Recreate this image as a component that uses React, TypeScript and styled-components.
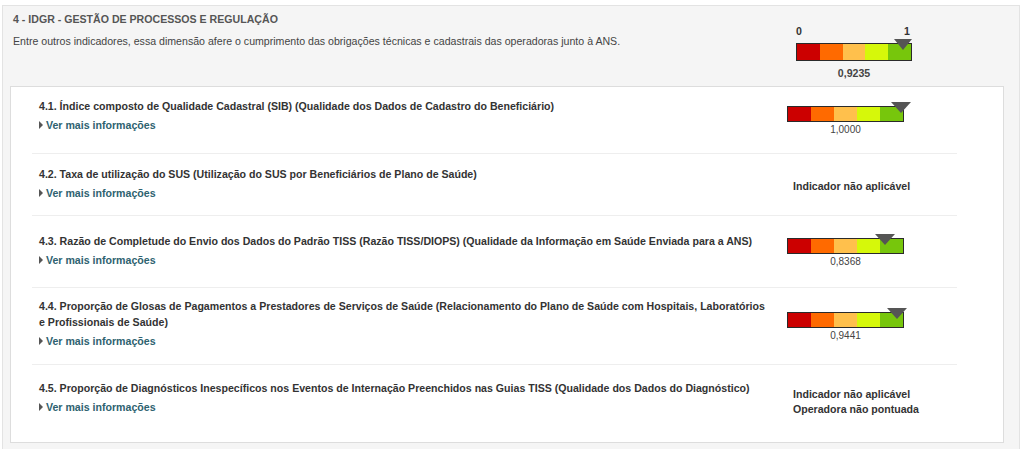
import React from 'react';
import styled, { createGlobalStyle } from 'styled-components';

const GlobalStyle = createGlobalStyle`
  html, body {
    margin: 0;
    padding: 0;
    background: #ffffff;
  }
  body {
    font-family: "Liberation Sans", Arial, sans-serif;
    font-size: 10.6px;
    color: #333;
  }
`;

const COLORS = ['#cc0000', '#ff6a00', '#ffc04c', '#d6f80a', '#77c60c'];

type Indicator = {
  title: string;
  value?: number;
  notes?: string[];
  top: number;
  height: number;
  side: number;
};

const indicators: Indicator[] = [
  {
    title:
      '4.1. Índice composto de Qualidade Cadastral (SIB) (Qualidade dos Dados de Cadastro do Beneficiário)',
    value: 1,
    top: 11,
    height: 67,
    side: 8,
  },
  {
    title: '4.2. Taxa de utilização do SUS (Utilização do SUS por Beneficiários de Plano de Saúde)',
    notes: ['Indicador não aplicável'],
    top: 12,
    height: 62,
    side: 13,
  },
  {
    title:
      '4.3. Razão de Completude do Envio dos Dados do Padrão TISS (Razão TISS/DIOPS) (Qualidade da Informação em Saúde Enviada para a ANS)',
    value: 0.8368,
    top: 17,
    height: 72,
    side: 5,
  },
  {
    title:
      '4.4. Proporção de Glosas de Pagamentos a Prestadores de Serviços de Saúde (Relacionamento do Plano de Saúde com Hospitais, Laboratórios e Profissionais de Saúde)',
    value: 0.9441,
    top: 10,
    height: 77,
    side: 14,
  },
  {
    title:
      '4.5. Proporção de Diagnósticos Inespecíficos nos Eventos de Internação Preenchidos nas Guias TISS (Qualidade dos Dados do Diagnóstico)',
    notes: ['Indicador não aplicável', 'Operadora não pontuada'],
    top: 15,
    height: 77,
    side: 7,
  },
];

const fmt = (v: number) => v.toFixed(4).replace('.', ',');

const Gauge = ({ value, main }: { value: number; main?: boolean }) => {
  const width = main ? 116 : 117;
  const left = Math.min(value * width, width - 3);
  return (
    <GaugeWrap $width={width}>
      {main && (
        <Scale>
          <span>0</span>
          <span>1</span>
        </Scale>
      )}
      <BarHolder>
        <Bar $height={main ? 18 : 16}>
          {COLORS.map((c) => (
            <Segment key={c} $color={c} />
          ))}
        </Bar>
        <Marker style={{ left }} $main={main} />
      </BarHolder>
      <GaugeValue $main={main}>{fmt(value)}</GaugeValue>
    </GaugeWrap>
  );
};

const App = () => (
  <>
    <GlobalStyle />
    <Panel>
      <PanelHeader>
        <HeaderText>
          <PanelTitle>4 - IDGR - Gestão de Processos e Regulação</PanelTitle>
          <PanelDesc>
            Entre outros indicadores, essa dimensão afere o cumprimento das obrigações técnicas e
            cadastrais das operadoras junto à ANS.
          </PanelDesc>
        </HeaderText>
        <HeaderGauge>
          <Gauge value={0.9235} main />
        </HeaderGauge>
      </PanelHeader>
      <ListBox>
        {indicators.map((ind, i) => (
          <Row
            key={ind.title}
            $top={ind.top}
            $height={ind.height}
            $last={i === indicators.length - 1}
          >
            <RowMain>
              <RowTitle>{ind.title}</RowTitle>
              <MoreLink>
                <Caret />
                Ver mais informações
              </MoreLink>
            </RowMain>
            <RowSide $offset={ind.side}>
              {ind.value !== undefined ? (
                <Gauge value={ind.value} />
              ) : (
                ind.notes?.map((n) => <Note key={n}>{n}</Note>)
              )}
            </RowSide>
          </Row>
        ))}
      </ListBox>
    </Panel>
  </>
);

const Panel = styled.div`
  margin: 5px 4px 0 2px;
  background: #f5f5f5;
  border: 1px solid #e3e3e3;
  border-bottom: none;
  padding: 0 15px 10px 7px;
  box-sizing: border-box;
`;

const PanelHeader = styled.div`
  display: flex;
  align-items: flex-start;
  height: 80px;
`;

const HeaderText = styled.div`
  flex: 1;
  padding: 6px 0 0 3px;
`;

const PanelTitle = styled.div`
  font-weight: bold;
  color: #555;
  text-transform: uppercase;
  line-height: 14px;
`;

const PanelDesc = styled.div`
  margin-top: 8px;
  color: #444;
  line-height: 14px;
`;

const HeaderGauge = styled.div`
  width: 208px;
  padding-top: 19px;
`;

const ListBox = styled.div`
  background: #fff;
  border: 1px solid #ddd;
  padding: 0 46px 0 21px;
`;

const Row = styled.div<{ $top: number; $height: number; $last: boolean }>`
  display: flex;
  align-items: flex-start;
  box-sizing: border-box;
  height: ${(p) => p.$height}px;
  padding: ${(p) => p.$top}px 0 0 7px;
  border-bottom: ${(p) => (p.$last ? 'none' : '1px solid #eeeeee')};
`;

const RowMain = styled.div`
  flex: 1;
  padding-right: 14px;
`;

const RowTitle = styled.div`
  font-weight: bold;
  color: #333;
  line-height: 16px;
`;

const MoreLink = styled.a`
  display: flex;
  align-items: center;
  margin-top: 4px;
  font-weight: bold;
  line-height: 14px;
  color: #2e6270;
  cursor: pointer;
`;

const Caret = styled.span`
  display: inline-block;
  width: 0;
  height: 0;
  border-top: 4px solid transparent;
  border-bottom: 4px solid transparent;
  border-left: 4px solid #555;
  margin: 0 3px 0 0;
`;

const RowSide = styled.div<{ $offset: number }>`
  width: 170px;
  padding-top: ${(p) => p.$offset}px;
`;

const Note = styled.div`
  font-weight: bold;
  color: #333;
  line-height: 15px;
  padding-left: 6px;
`;

const GaugeWrap = styled.div<{ $width: number }>`
  width: ${(p) => p.$width}px;
`;

const Scale = styled.div`
  display: flex;
  justify-content: space-between;
  font-weight: bold;
  color: #333;
  line-height: 12px;
  margin-bottom: 6px;
  padding-right: 2px;
`;

const BarHolder = styled.div`
  position: relative;
`;

const Bar = styled.div<{ $height: number }>`
  display: flex;
  height: ${(p) => p.$height}px;
  border: 1px solid #2a2a2a;
  box-sizing: border-box;
`;

const Segment = styled.div<{ $color: string }>`
  flex: 1;
  background: ${(p) => p.$color};
`;

const Marker = styled.div<{ $main?: boolean }>`
  position: absolute;
  top: -4px;
  width: 0;
  height: 0;
  transform: translateX(-50%);
  border-left: ${(p) => (p.$main ? 9 : 10)}px solid transparent;
  border-right: ${(p) => (p.$main ? 9 : 10)}px solid transparent;
  border-top: 11px solid #555;
`;

const GaugeValue = styled.div<{ $main?: boolean }>`
  text-align: center;
  margin-top: ${(p) => (p.$main ? 6 : 2)}px;
  font-size: ${(p) => (p.$main ? 10.6 : 10)}px;
  font-weight: ${(p) => (p.$main ? 'bold' : 'normal')};
  color: #444;
  line-height: 12px;
`;

export default App;
